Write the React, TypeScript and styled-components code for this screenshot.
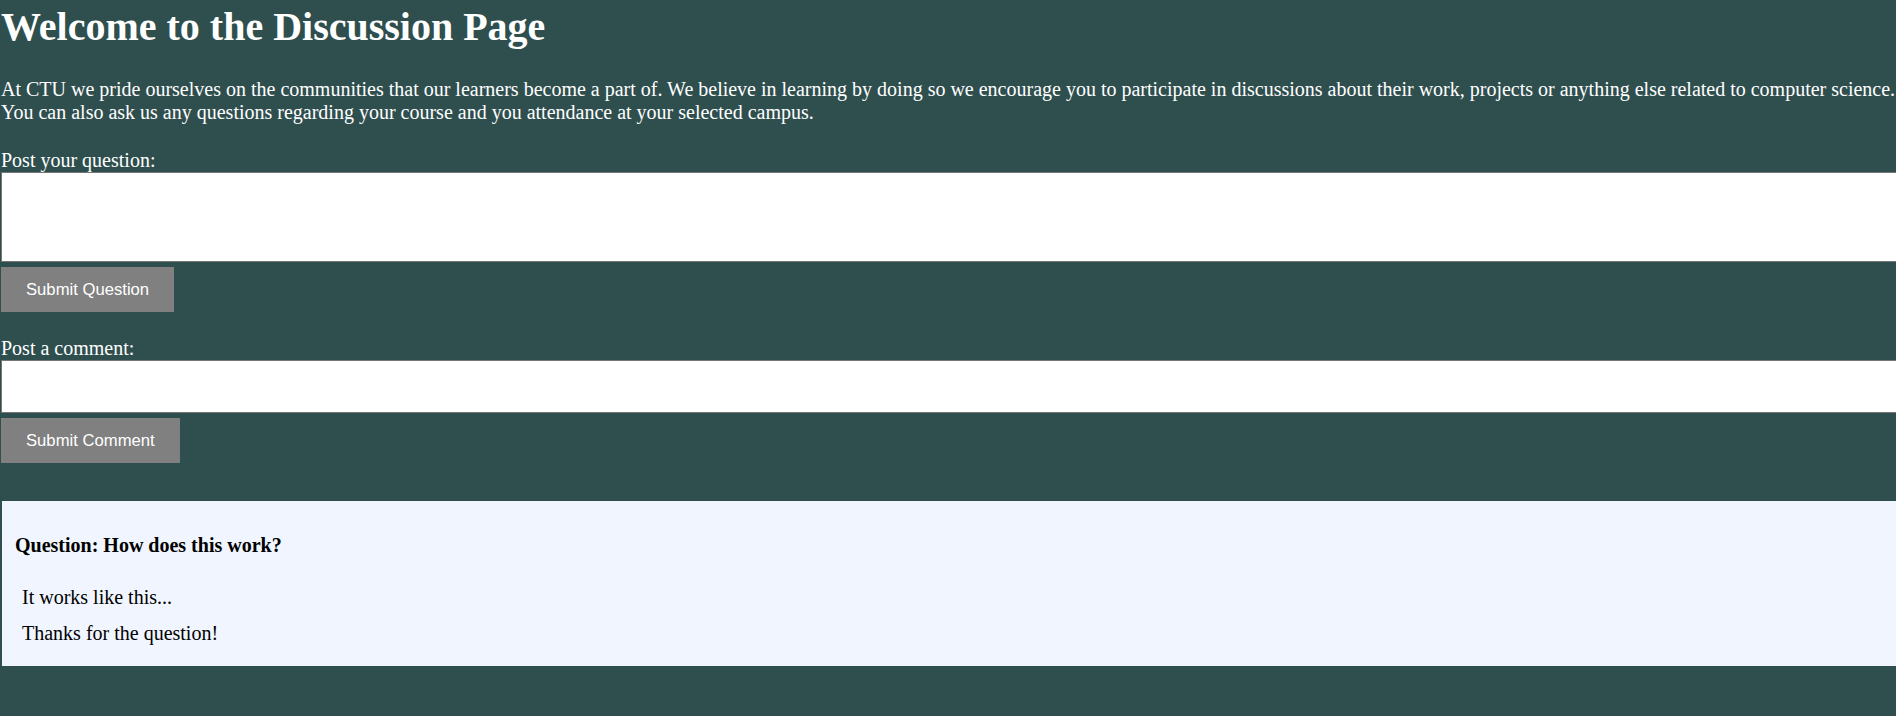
import React from "react";
import styled, { createGlobalStyle } from "styled-components";

const GlobalStyle = createGlobalStyle`
  html, body {
    margin: 0;
    padding: 0;
    background: #2f4f4f;
    overflow: hidden;
  }
  body {
    font-family: "Liberation Serif", "Times New Roman", serif;
  }
`;

const Page = styled.main`
  min-height: 716px;
  padding-left: 1px;
  background: #2f4f4f;
  color: #ffffff;
  font-family: "Liberation Serif", "Times New Roman", serif;
  font-size: 20px;
  line-height: 23px;
`;

const Title = styled.h1`
  margin: 3.5px 0 0;
  font-size: 40px;
  line-height: 46px;
  font-weight: 700;
`;

const Intro = styled.p`
  margin: 28px 0 0;
`;

const Form = styled.form<{ $gap: number }>`
  display: flex;
  flex-direction: column;
  align-items: flex-start;
  margin-top: ${(p) => p.$gap}px;
`;

const Label = styled.label`
  display: block;
  line-height: 23px;
`;

const TextArea = styled.textarea<{ $h: number }>`
  display: block;
  box-sizing: border-box;
  width: calc(100% + 12px);
  height: ${(p) => p.$h}px;
  margin: 0;
  border: 1px solid #767676;
  background: #ffffff;
  resize: none;
  font-family: "Liberation Mono", monospace;
  font-size: 16px;
`;

const Button = styled.button`
  margin-top: 5px;
  padding: 0 25px;
  height: 45px;
  border: none;
  background: #808080;
  color: #ffffff;
  font-family: "Liberation Sans", Arial, sans-serif;
  font-size: 16.67px;
  line-height: 19px;
  cursor: pointer;
`;

const Card = styled.section`
  margin: 38px -12px 0 1px;
  padding: 33.5px 13px 21px 13px;
  background: #f0f5ff;
  color: #000000;
`;

const QuestionTitle = styled.h4`
  margin: 0;
  font-size: 20px;
  line-height: 23px;
  font-weight: 700;
`;

const Comments = styled.div`
  display: flex;
  flex-direction: column;
  gap: 13.7px;
  margin-top: 28.5px;
  padding-left: 7px;
`;

const Comment = styled.p`
  margin: 0;
`;

export default function App() {
  return (
    <>
      <GlobalStyle />
      <Page>
        <Title>Welcome to the Discussion Page</Title>
        <Intro>
          At CTU we pride ourselves on the communities that our learners become a part of. We believe in
          learning by doing so we encourage you to participate in discussions about their work, projects or
          anything else related to computer science.
          <br />
          You can also ask us any questions regarding your course and you attendance at your selected campus.
        </Intro>
        <Form $gap={25.5} onSubmit={(e) => e.preventDefault()}>
          <Label htmlFor="question">Post your question:</Label>
          <TextArea id="question" $h={90} />
          <Button type="submit">Submit Question</Button>
        </Form>
        <Form $gap={24.75} onSubmit={(e) => e.preventDefault()}>
          <Label htmlFor="comment">Post a comment:</Label>
          <TextArea id="comment" $h={53} />
          <Button type="submit">Submit Comment</Button>
        </Form>
        <Card>
          <QuestionTitle>Question: How does this work?</QuestionTitle>
          <Comments>
            <Comment>It works like this...</Comment>
            <Comment>Thanks for the question!</Comment>
          </Comments>
        </Card>
      </Page>
    </>
  );
}
